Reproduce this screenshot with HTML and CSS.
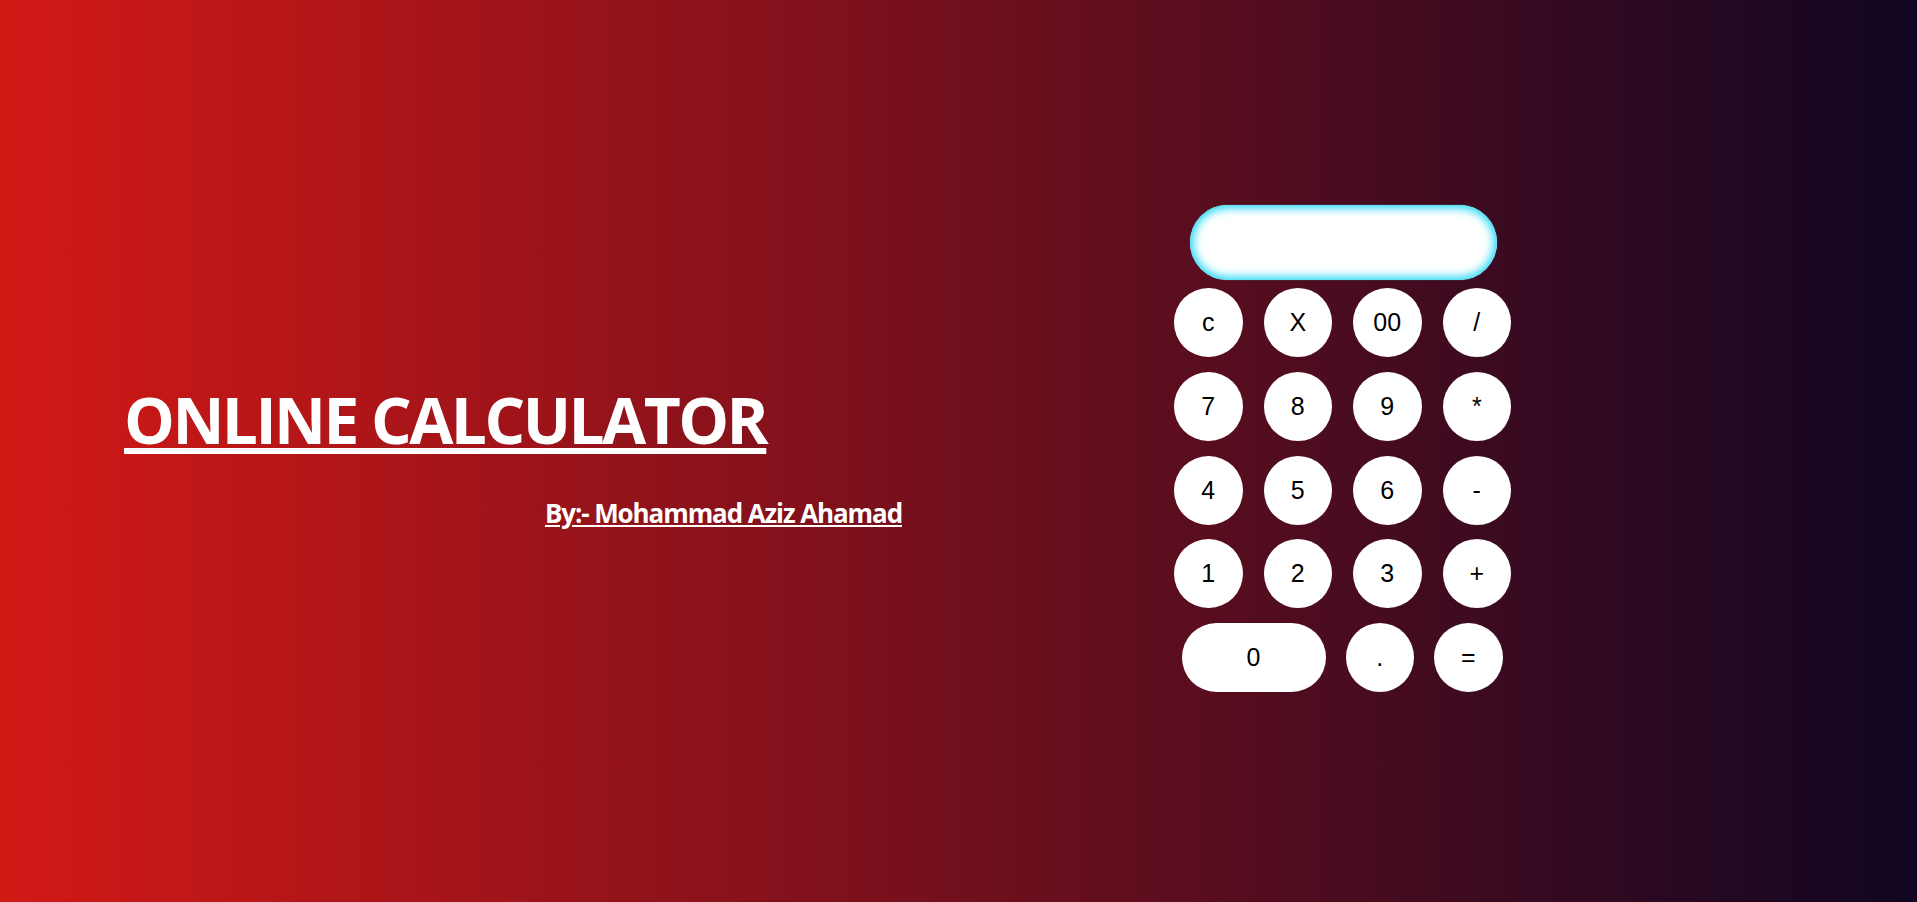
FILE: index.html
```html
<!DOCTYPE html>
<html lang="en">
<head>
<meta charset="utf-8">
<title>Online Calculator</title>
<link rel="stylesheet" href="styles.css">
</head>
<body>
<main class="page">
  <section class="intro">
    <h1 class="title">ONLINE CALCULATOR</h1>
    <p class="byline">By:- Mohammad Aziz Ahamad</p>
  </section>
  <section class="calc">
    <div class="display"></div>
    <div class="keys">
      <div class="row">
        <button class="key">c</button>
        <button class="key">X</button>
        <button class="key">00</button>
        <button class="key">/</button>
      </div>
      <div class="row">
        <button class="key">7</button>
        <button class="key">8</button>
        <button class="key">9</button>
        <button class="key">*</button>
      </div>
      <div class="row">
        <button class="key">4</button>
        <button class="key">5</button>
        <button class="key">6</button>
        <button class="key">-</button>
      </div>
      <div class="row">
        <button class="key">1</button>
        <button class="key">2</button>
        <button class="key">3</button>
        <button class="key">+</button>
      </div>
      <div class="row row-last">
        <button class="key key-wide">0</button>
        <button class="key">.</button>
        <button class="key">=</button>
      </div>
    </div>
  </section>
</main>
</body>
</html>
```

FILE: styles.css
```css
* {
  box-sizing: border-box;
}

html, body {
  margin: 0;
  padding: 0;
  height: 100%;
}

body {
  background: linear-gradient(to right, #d31916 0%, #100623 100%);
  font-family: "Open Sans", "Liberation Sans", sans-serif;
  color: #fff;
  overflow: hidden;
}

.page {
  height: 100vh;
  display: flex;
  align-items: center;
}

.intro {
  margin-left: 124px;
  width: 778px;
  display: flex;
  flex-direction: column;
  padding-top: 30px;
}

.title {
  margin: 0;
  font-size: 64px;
  font-weight: 700;
  line-height: 78px;
  letter-spacing: -2.55px;
  text-decoration: underline;
  text-decoration-thickness: 6px;
  text-underline-offset: 4px;
  white-space: nowrap;
}

.byline {
  margin: 15px 0 0;
  align-self: flex-end;
  font-size: 26px;
  font-weight: 700;
  line-height: 78px;
  letter-spacing: -1.1px;
  text-decoration: underline;
  text-decoration-thickness: 2px;
  text-underline-offset: 2px;
}

.calc {
  margin-left: 272px;
  margin-bottom: 5px;
  width: 337px;
  display: flex;
  flex-direction: column;
  align-items: center;
  gap: 8px;
}

.display {
  width: 307px;
  height: 75px;
  margin-left: 2px;
  border-radius: 40px;
  background: #fff;
  box-shadow: inset 0 0 10px 3px #1fd6f4, 0 0 1px #2fd3ef;
}

.keys {
  display: flex;
  flex-direction: column;
  gap: 14.75px;
  width: 100%;
}

.row {
  display: flex;
  justify-content: center;
  gap: 21px;
}

.row-last {
  gap: 20px;
  padding-right: 1px;
}

.key {
  width: 68.5px;
  height: 69px;
  border: none;
  border-radius: 50%;
  background: #fff;
  color: #000;
  font-family: "Liberation Sans", Arial, sans-serif;
  font-size: 25px;
  padding: 0;
  display: flex;
  align-items: center;
  justify-content: center;
}

.key-wide {
  width: 144px;
  border-radius: 35px;
}
```
